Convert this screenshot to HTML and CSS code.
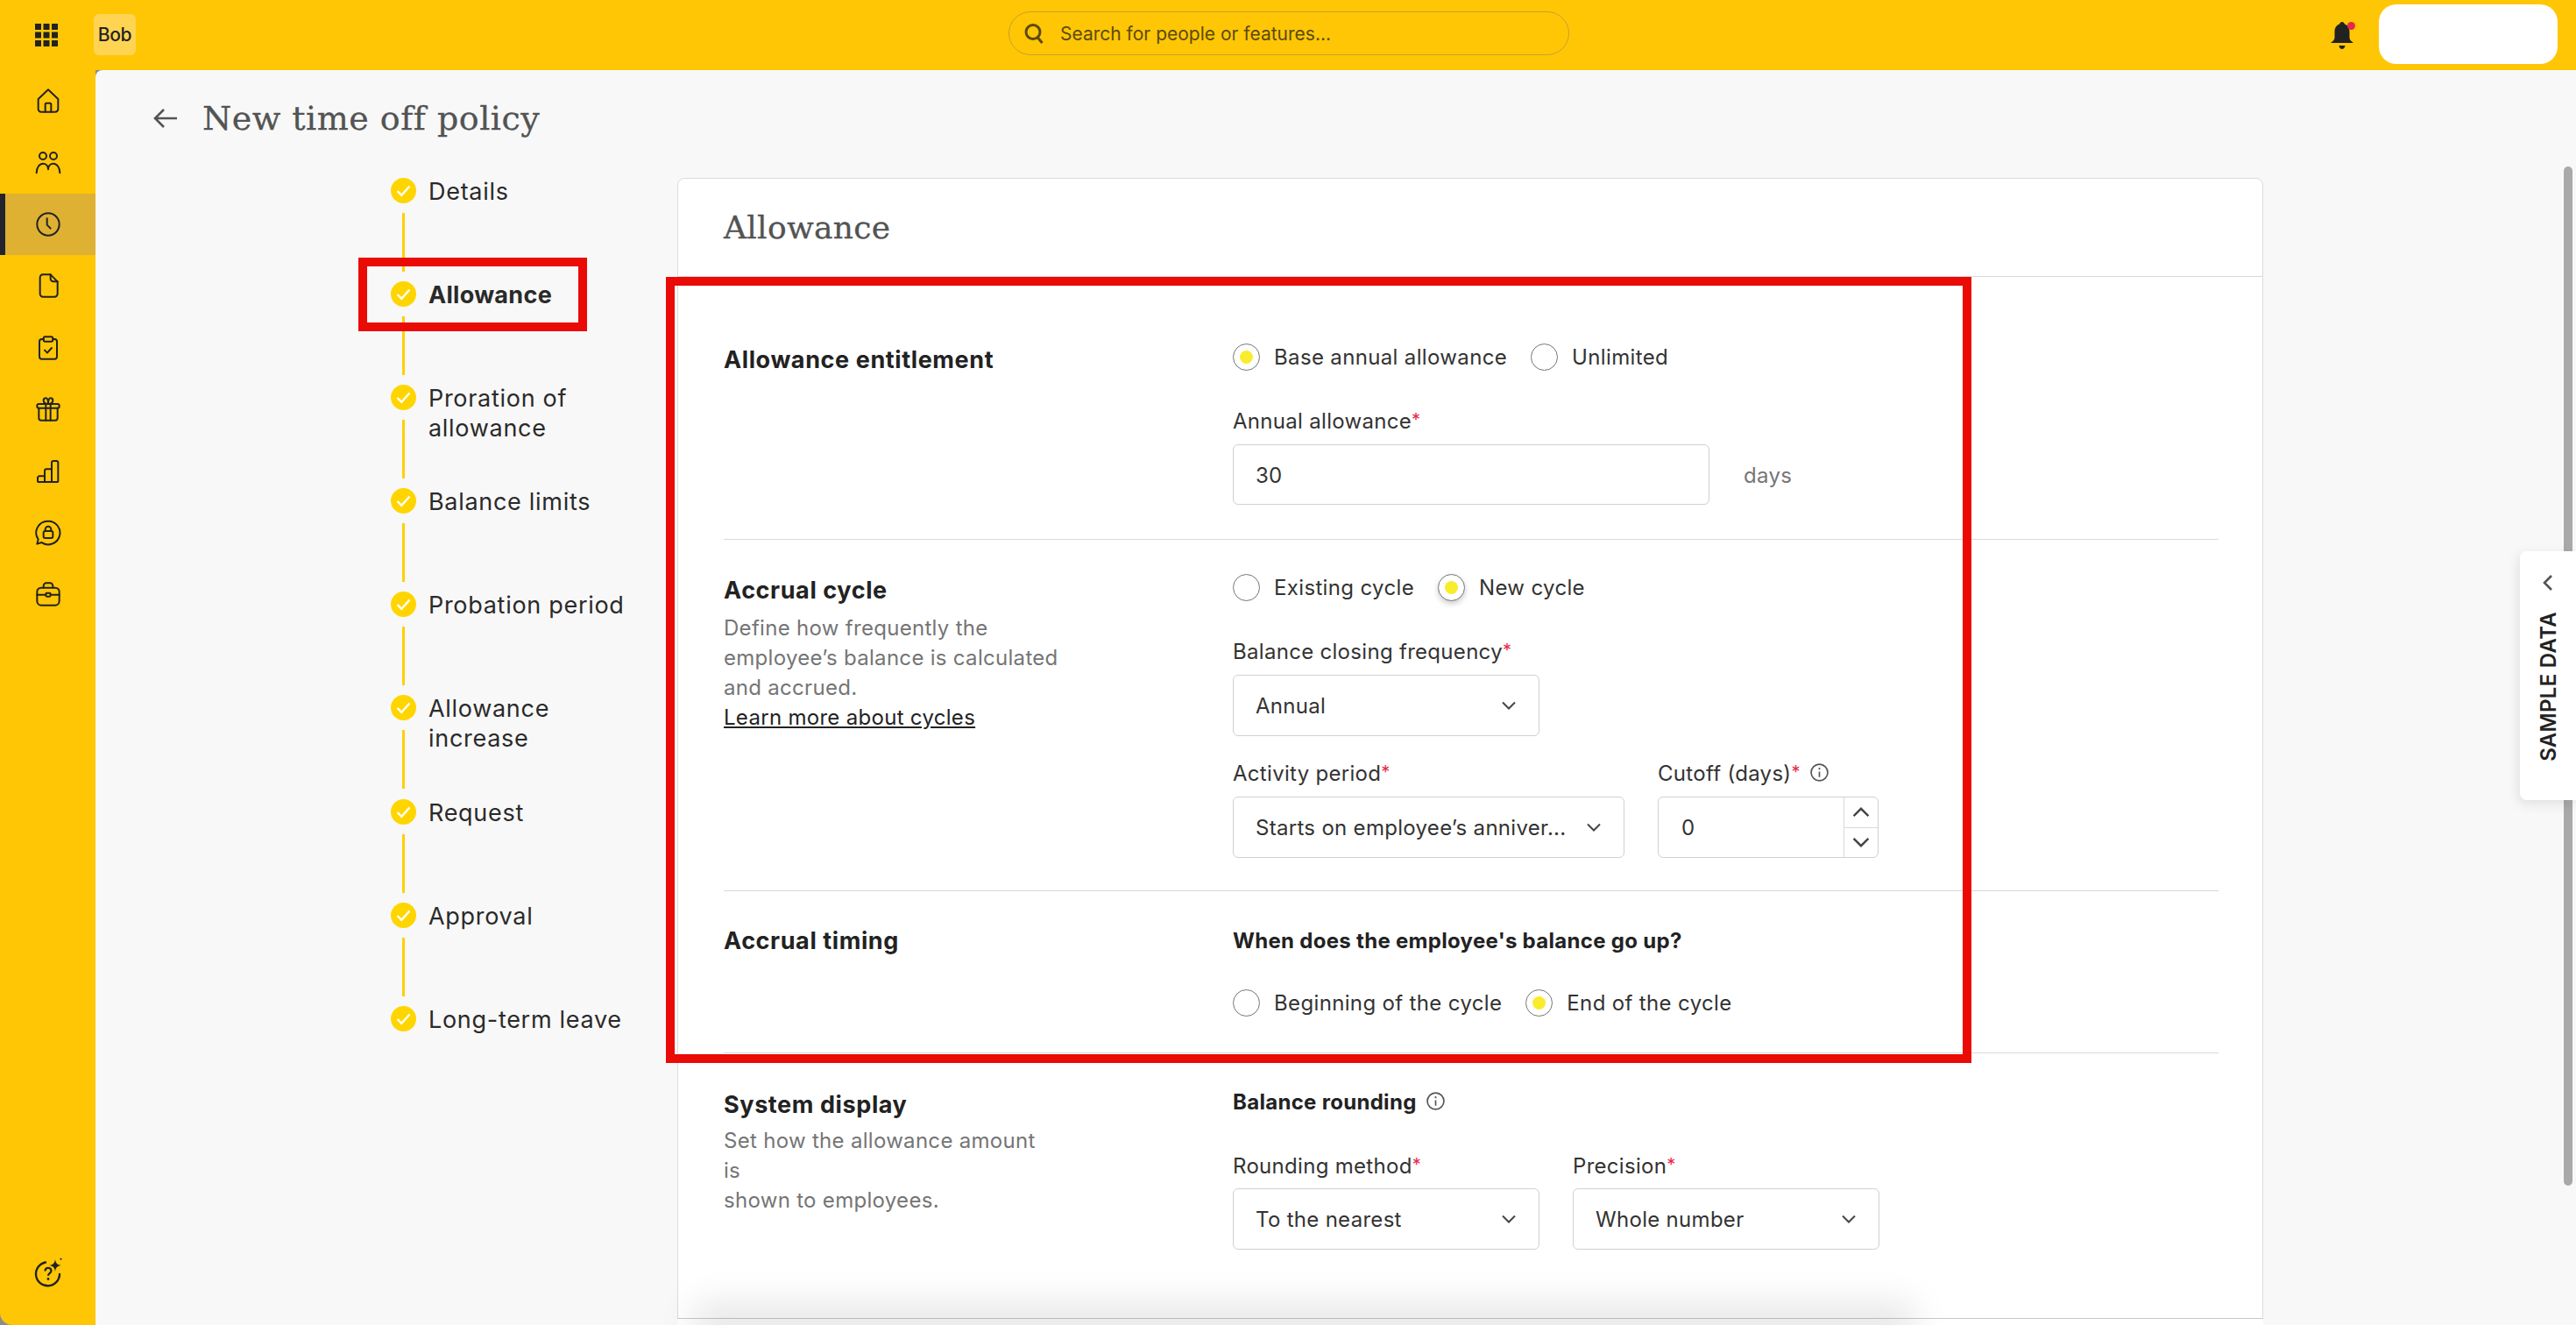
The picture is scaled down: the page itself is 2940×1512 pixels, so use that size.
FILE: index.html
```html
<!DOCTYPE html>
<html lang="en">
  <head>
    <title>New time off policy</title>
    <meta charset="utf-8" />
    <link rel="stylesheet" href="styles.css">
  </head>
  <body>
    <div class="app">
      <header class="topbar">
        <div class="topbar-left">
          <svg class="grid-icon" viewBox="0 0 26 26"><g fill="#222"><rect x="0" y="0" width="7" height="7"/><rect x="9.5" y="0" width="7" height="7"/><rect x="19" y="0" width="7" height="7"/><rect x="0" y="9.5" width="7" height="7"/><rect x="9.5" y="9.5" width="7" height="7"/><rect x="19" y="9.5" width="7" height="7"/><rect x="0" y="19" width="7" height="7"/><rect x="9.5" y="19" width="7" height="7"/><rect x="19" y="19" width="7" height="7"/></g></svg>
          <div class="logo">Bob</div>
        </div>
        <div class="search">
          <svg class="search-icon" viewBox="0 0 24 24"><circle cx="11" cy="10.5" r="8" fill="none" stroke="#5c4a0c" stroke-width="3"/><path d="M16 16.5 21.5 23" stroke="#5c4a0c" stroke-width="3" fill="none"/></svg>
          <span>Search for people or features...</span>
        </div>
        <div class="topbar-right">
          <div class="bell">
            <svg viewBox="0 0 26 32" width="26" height="32"><path d="M13 0c1.600 0 2.600 1 2.800 2.400C19.600 3.600 21.500 7 21.500 11v7c0 2.500 2 4 4.500 6H0c2.500-2 4.500-3.500 4.500-6v-7c0-4 1.900-7.400 5.700-8.600C10.400 1 11.400 0 13 0z" fill="#222"/><path d="M9.500 27h7c-.4 2.500-1.800 4-3.500 4s-3.100-1.500-3.500-4z" fill="#222"/></svg>
            <span class="bell-dot"></span>
          </div>
          <div class="user-box"></div>
        </div>
      </header>

      <div class="layout">
        <nav class="sidebar">
          <div class="nav-items">
            <a class="nav-item"><svg class="nav-icon" viewBox="0 0 24 24"><path d="M3.500 10.500 12 2.500l8.500 8V19a2.500 2.500 0 0 1-2.500 2.500H6A2.500 2.500 0 0 1 3.500 19z"/><path d="M9.500 21.500V15a1 1 0 0 1 1-1h3a1 1 0 0 1 1 1v6.500"/></svg></a>
            <a class="nav-item"><svg class="nav-icon" viewBox="0 0 24 24"><circle cx="7.500" cy="6" r="3"/><circle cx="16.500" cy="6" r="3"/><path d="M2 20.500c0-4.500 2.500-8 5.500-8 2.500 0 4.500 2 4.500 5 0-3 2-5 4.500-5 3 0 5.500 3.500 5.500 8"/></svg></a>
            <a class="nav-item active"><svg class="nav-icon" viewBox="0 0 24 24"><circle cx="12" cy="12" r="9.500"/><path d="M11 7v5.500l3 3"/></svg></a>
            <a class="nav-item"><svg class="nav-icon" viewBox="0 0 24 24"><path d="M5 5a2.500 2.500 0 0 1 2.500-2.500H14l6 6V19a2.500 2.500 0 0 1-2.500 2.500h-10A2.500 2.500 0 0 1 5 19z"/><path d="M14 2.500V6a2.500 2.500 0 0 0 2.500 2.500H20"/></svg></a>
            <a class="nav-item"><svg class="nav-icon" viewBox="0 0 24 24"><path d="M8 4.500H6.500A2 2 0 0 0 4.500 6.500V19.500a2 2 0 0 0 2 2h11a2 2 0 0 0 2-2V6.500a2 2 0 0 0-2-2H16"/><rect x="8" y="2.500" width="8" height="4" rx="1.500"/><path d="m9 14 2.200 2.200L15 12"/></svg></a>
            <a class="nav-item"><svg class="nav-icon" viewBox="0 0 24 24"><rect x="2.500" y="7.500" width="19" height="3.500" rx="1.500"/><path d="M4 11v8.500a2 2 0 0 0 2 2h12a2 2 0 0 0 2-2V11"/><path d="M10 7.500v14M14 7.500v14"/><path d="M12 7.500C9 7.500 8 6 8 4.500s1-2 2-2 2 1.500 2 5c0-3.500 1-5 2-5s2 .5 2 2-1 3-4 3z"/></svg></a>
            <a class="nav-item"><svg class="nav-icon" viewBox="0 0 24 24"><path d="M3 20.500v-3a1.500 1.500 0 0 1 1.500-1.500H9v-4.500A1.500 1.500 0 0 1 10.500 10H15V4.500A1.500 1.500 0 0 1 16.500 3h2.500a1.500 1.500 0 0 1 1.500 1.500v16a.5.5 0 0 1-.5.5H3.500a.5.5 0 0 1-.5-.5z"/><path d="M9 16v5M15 10v11"/></svg></a>
            <a class="nav-item"><svg class="nav-icon" viewBox="0 0 24 24"><path d="M12 2a10 10 0 1 1-5.500 18.300L2.500 21.500l1-3.800A10 10 0 0 1 12 2z"/><rect x="8" y="10.500" width="8" height="6" rx="1.500"/><path d="M9.500 10.500V9a2.500 2.500 0 0 1 5 0v1.500"/></svg></a>
            <a class="nav-item"><svg class="nav-icon" viewBox="0 0 24 24"><rect x="2.500" y="6.500" width="19" height="15" rx="3.500"/><path d="M8 6.500V5a2.500 2.500 0 0 1 2.500-2.500h3A2.500 2.500 0 0 1 16 5v1.500"/><path d="M2.500 12.500H10M14 12.500h7.500"/><rect x="10" y="11" width="4" height="3" rx=".8"/></svg></a>
          </div>
          <a class="nav-help"><svg class="nav-help-icon" viewBox="0 0 36 36"><path d="M15 5.500A13.500 13.500 0 1 0 31 19" fill="none" stroke="#222" stroke-width="2.400" stroke-linecap="round"/><path d="M14.500 15.500c0-2.300 1.600-3.700 3.500-3.700s3.500 1.300 3.500 3.100c0 2.900-3.500 2.900-3.500 5.900" fill="none" stroke="#222" stroke-width="2.200"/><circle cx="18" cy="24.500" r="1.400" fill="#222"/><path d="M26 2c.6 4.600 2.400 6.400 7 7-4.600.6-6.400 2.400-7 7-.6-4.600-2.400-6.400-7-7 4.600-.6 6.400-2.400 7-7z" fill="#222"/><path d="M32.500 0c.2 1.200.6 1.600 1.800 1.800-1.200.2-1.600.6-1.800 1.800-.2-1.200-.6-1.600-1.800-1.800 1.200-.2 1.600-.6 1.800-1.800z" fill="#222"/></svg></a>
        </nav>

        <main class="main">
          <div class="page-title">
            <svg class="back-icon" viewBox="0 0 28 24"><path d="M27 12H2M12 2 2 12l10 10" fill="none" stroke="#535353" stroke-width="2.600"/></svg>
            <h1>New time off policy</h1>
          </div>

          <div class="content">
            <ol class="steps">
              <li class="step"><div class="step-mark"><svg class="check" viewBox="0 0 29 29"><circle cx="14.500" cy="14.500" r="14.500" fill="#ffd500"/><path d="m7.500 15 4.800 4.800L21.500 9.500" fill="none" stroke="#fff" stroke-width="2.400"/></svg><span class="step-line"></span></div><span class="step-label">Details</span></li>
              <li class="step current"><div class="step-mark"><svg class="check" viewBox="0 0 29 29"><circle cx="14.500" cy="14.500" r="14.500" fill="#ffd500"/><path d="m7.500 15 4.800 4.800L21.500 9.500" fill="none" stroke="#fff" stroke-width="2.400"/></svg><span class="step-line"></span></div><span class="step-label">Allowance</span></li>
              <li class="step"><div class="step-mark"><svg class="check" viewBox="0 0 29 29"><circle cx="14.500" cy="14.500" r="14.500" fill="#ffd500"/><path d="m7.500 15 4.800 4.800L21.500 9.500" fill="none" stroke="#fff" stroke-width="2.400"/></svg><span class="step-line"></span></div><span class="step-label">Proration of<br>allowance</span></li>
              <li class="step"><div class="step-mark"><svg class="check" viewBox="0 0 29 29"><circle cx="14.500" cy="14.500" r="14.500" fill="#ffd500"/><path d="m7.500 15 4.800 4.800L21.500 9.500" fill="none" stroke="#fff" stroke-width="2.400"/></svg><span class="step-line"></span></div><span class="step-label">Balance limits</span></li>
              <li class="step"><div class="step-mark"><svg class="check" viewBox="0 0 29 29"><circle cx="14.500" cy="14.500" r="14.500" fill="#ffd500"/><path d="m7.500 15 4.800 4.800L21.500 9.500" fill="none" stroke="#fff" stroke-width="2.400"/></svg><span class="step-line"></span></div><span class="step-label">Probation period</span></li>
              <li class="step"><div class="step-mark"><svg class="check" viewBox="0 0 29 29"><circle cx="14.500" cy="14.500" r="14.500" fill="#ffd500"/><path d="m7.500 15 4.800 4.800L21.500 9.500" fill="none" stroke="#fff" stroke-width="2.400"/></svg><span class="step-line"></span></div><span class="step-label">Allowance<br>increase</span></li>
              <li class="step"><div class="step-mark"><svg class="check" viewBox="0 0 29 29"><circle cx="14.500" cy="14.500" r="14.500" fill="#ffd500"/><path d="m7.500 15 4.800 4.800L21.500 9.500" fill="none" stroke="#fff" stroke-width="2.400"/></svg><span class="step-line"></span></div><span class="step-label">Request</span></li>
              <li class="step"><div class="step-mark"><svg class="check" viewBox="0 0 29 29"><circle cx="14.500" cy="14.500" r="14.500" fill="#ffd500"/><path d="m7.500 15 4.800 4.800L21.500 9.500" fill="none" stroke="#fff" stroke-width="2.400"/></svg><span class="step-line"></span></div><span class="step-label">Approval</span></li>
              <li class="step last"><div class="step-mark"><svg class="check" viewBox="0 0 29 29"><circle cx="14.500" cy="14.500" r="14.500" fill="#ffd500"/><path d="m7.500 15 4.800 4.800L21.500 9.500" fill="none" stroke="#fff" stroke-width="2.400"/></svg></div><span class="step-label">Long-term leave</span></li>
            </ol>

            <section class="card">
              <div class="card-header"><h2>Allowance</h2></div>
              <div class="card-body">

                <div class="row row-entitlement">
                  <div class="row-info"><h3>Allowance entitlement</h3></div>
                  <div class="row-fields">
                    <div class="radio-group">
                      <label class="radio checked"><span class="radio-dot"></span>Base annual allowance</label>
                      <label class="radio"><span class="radio-dot"></span>Unlimited</label>
                    </div>
                    <div class="field field-annual">
                      <div class="field-label">Annual allowance<i>*</i></div>
                      <div class="field-inline">
                        <div class="input input-annual">30</div>
                        <span class="unit">days</span>
                      </div>
                    </div>
                  </div>
                </div>

                <div class="row row-cycle">
                  <div class="row-info">
                    <h3>Accrual cycle</h3>
                    <p>Define how frequently the<br>employee’s balance is calculated<br>and accrued.<br><a class="learn-more">Learn more about cycles</a></p>
                  </div>
                  <div class="row-fields">
                    <div class="radio-group">
                      <label class="radio"><span class="radio-dot"></span>Existing cycle</label>
                      <label class="radio checked focused"><span class="radio-dot"></span>New cycle</label>
                    </div>
                    <div class="field field-frequency">
                      <div class="field-label">Balance closing frequency<i>*</i></div>
                      <div class="input select select-short"><span>Annual</span><svg class="chevron" viewBox="0 0 16 10"><path d="m1 1.500 7 7 7-7"/></svg></div>
                    </div>
                    <div class="field-pair">
                      <div class="field">
                        <div class="field-label">Activity period<i>*</i></div>
                        <div class="input select select-long"><span>Starts on employee’s anniver...</span><svg class="chevron" viewBox="0 0 16 10"><path d="m1 1.500 7 7 7-7"/></svg></div>
                      </div>
                      <div class="field">
                        <div class="field-label">Cutoff (days)<i>*</i><svg class="info-icon" viewBox="0 0 20 20"><circle cx="10" cy="10" r="9"/><path d="M10 9v6M10 4.800v2"/></svg></div>
                        <div class="input number">
                          <span class="number-value">0</span>
                          <div class="spinner">
                            <div class="spin"><svg class="chevron spin-chevron up" viewBox="0 0 16 10"><path d="m1 1.500 7 7 7-7"/></svg></div>
                            <div class="spin"><svg class="chevron spin-chevron" viewBox="0 0 16 10"><path d="m1 1.500 7 7 7-7"/></svg></div>
                          </div>
                        </div>
                      </div>
                    </div>
                  </div>
                </div>

                <div class="row row-timing">
                  <div class="row-info"><h3>Accrual timing</h3></div>
                  <div class="row-fields">
                    <div class="subhead">When does the employee's balance go up?</div>
                    <div class="radio-group timing-radios">
                      <label class="radio"><span class="radio-dot"></span>Beginning of the cycle</label>
                      <label class="radio checked"><span class="radio-dot"></span>End of the cycle</label>
                    </div>
                  </div>
                </div>

                <div class="row row-display">
                  <div class="row-info">
                    <h3>System display</h3>
                    <p>Set how the allowance amount<br>is<br>shown to employees.</p>
                  </div>
                  <div class="row-fields">
                    <div class="subhead">Balance rounding<svg class="info-icon" viewBox="0 0 20 20"><circle cx="10" cy="10" r="9"/><path d="M10 9v6M10 4.800v2"/></svg></div>
                    <div class="field-pair display-pair">
                      <div class="field">
                        <div class="field-label">Rounding method<i>*</i></div>
                        <div class="input select select-short"><span>To the nearest</span><svg class="chevron" viewBox="0 0 16 10"><path d="m1 1.500 7 7 7-7"/></svg></div>
                      </div>
                      <div class="field">
                        <div class="field-label">Precision<i>*</i></div>
                        <div class="input select select-short"><span>Whole number</span><svg class="chevron" viewBox="0 0 16 10"><path d="m1 1.500 7 7 7-7"/></svg></div>
                      </div>
                    </div>
                  </div>
                </div>

              </div>
            </section>
          </div>
        </main>
      </div>

      <!-- things on top of the page -->
      <div class="card-footer"></div>
      <div class="scrollbar"></div>
      <div class="sample-tab">
        <svg class="sample-chevron" viewBox="0 0 12 20"><path d="M10 2 2 10l8 8" fill="none" stroke="#535353" stroke-width="2.600"/></svg>
        <span>SAMPLE DATA</span>
      </div>
      <div class="mark mark-step"></div>
      <div class="mark mark-form"></div>
    </div>
  </body>
</html>
```

FILE: styles.css
```css
* {
  box-sizing: border-box;
}

html,
body {
  margin: 0;
  height: 100%;
  overflow: hidden;
  background-color: #8c8c8c;
}

body {
  font-family: 'Inter', 'Open Sans', sans-serif;
  color: #222;
}

.app {
  position: relative;
  width: 2940px;
  height: 1512px;
  display: flex;
  flex-direction: column;
  overflow: hidden;
}

/* top bar */
.topbar {
  flex: none;
  height: 80px;
  background-color: #ffc605;
  display: flex;
  align-items: center;
  position: relative;
}

.topbar-left {
  display: flex;
  align-items: center;
  padding-left: 40px;
  gap: 41px;
}

.grid-icon {
  width: 26px;
  height: 26px;
}

.logo {
  width: 48px;
  height: 47px;
  border-radius: 6px;
  background-color: #ffd452;
  display: flex;
  align-items: center;
  justify-content: center;
  font-size: 21px;
  font-weight: 500;
  letter-spacing: -0.3px;
  margin-top: -1px;
}

.search {
  width: 640px;
  height: 50px;
  margin-left: 996px;
  margin-top: -4px;
  border: 1px solid #c9a02a;
  border-radius: 25px;
  display: flex;
  align-items: center;
  padding-left: 16px;
  gap: 18px;
  font-size: 21px;
  color: #5c4a0c;
}

.search-icon {
  width: 24px;
  height: 24px;
}

.topbar-right {
  margin-left: auto;
  padding-right: 21px;
  display: flex;
  align-items: center;
  gap: 29px;
}

.bell {
  position: relative;
  width: 26px;
  height: 32px;
  margin-top: 2px;
}

.bell svg {
  display: block;
}

.bell-dot {
  position: absolute;
  top: 0;
  right: -2px;
  width: 9px;
  height: 9px;
  border-radius: 50%;
  background-color: #e8274b;
}

.user-box {
  width: 204px;
  height: 68px;
  border-radius: 20px;
  background-color: #fff;
  margin-top: -2px;
}

/* side nav */
.layout {
  flex: 1;
  display: flex;
  min-height: 0;
}

.sidebar {
  flex: none;
  width: 109px;
  background-color: #ffc605;
  border-bottom-left-radius: 14px;
  display: flex;
  flex-direction: column;
  justify-content: space-between;
  padding-bottom: 41px;
}

.nav-item,
.nav-help {
  display: flex;
  align-items: center;
  justify-content: center;
  height: 70.400px;
}

.nav-item.active {
  background-color: #deb133;
  border-left: 6px solid #24242c;
  padding-right: 6px;
}

.nav-help {
  height: 36px;
}

.nav-icon {
  width: 32px;
  height: 32px;
  fill: none;
  stroke: #222;
  stroke-width: 1.500;
  stroke-linecap: round;
  stroke-linejoin: round;
}

.nav-help-icon {
  width: 36px;
  height: 36px;
}

/* page */
.main {
  flex: 1;
  min-width: 0;
  background-color: #f8f8f8;
  border-top-left-radius: 8px;
}

.page-title {
  display: flex;
  align-items: center;
  height: 50px;
  margin-top: 30px;
  padding-left: 66px;
}

.back-icon {
  width: 28px;
  height: 24px;
  margin-right: 28px;
}

.page-title h1 {
  margin: 0;
  font-family: 'DejaVu Serif', serif;
  font-weight: 400;
  font-size: 38px;
  letter-spacing: 0.5px;
  color: #535353;
  -webkit-text-stroke: 0.3px #535353;
}

.content {
  display: flex;
  margin-top: 43px;
  padding-left: 337px;
}

/* steps */
.steps {
  flex: none;
  width: 327px;
  margin: 0;
  padding: 0;
  list-style: none;
}

.step {
  display: flex;
  height: 118.100px;
  gap: 14px;
}

.step-mark {
  flex: none;
  width: 29px;
  display: flex;
  flex-direction: column;
  align-items: center;
}

.check {
  width: 29px;
  height: 29px;
  flex: none;
}

.step-line {
  width: 3px;
  height: 67px;
  margin-top: 11px;
  background-color: #ffd000;
}

.step-label {
  margin-top: -1px;
  font-size: 27px;
  line-height: 34px;
  letter-spacing: 0.7px;
  color: #2a2a2a;
  white-space: nowrap;
}

.step.current .step-label {
  font-weight: 700;
  letter-spacing: 0.3px;
}

/* card */
.card {
  width: 1810px;
  height: 1400px;
  background-color: #fff;
  border: 1px solid #dcdcdc;
  border-radius: 8px;
}

.card-header {
  height: 112px;
  display: flex;
  align-items: center;
  padding-left: 52px;
  border-bottom: 1px solid #d9d9d9;
}

.card-header h2 {
  margin: 0;
  font-family: 'DejaVu Serif', serif;
  font-weight: 400;
  font-size: 36px;
  letter-spacing: 0.3px;
  color: #535353;
  -webkit-text-stroke: 0.3px #535353;
}

.card-body {
  padding: 0 50px 0 52px;
}

.row {
  display: grid;
  grid-template-columns: 581px 1fr;
  border-bottom: 1px solid #d9d9d9;
}

.row-display {
  border-bottom: 0;
}

.row h3 {
  margin: 0;
  font-size: 27px;
  line-height: 34px;
  letter-spacing: 0.6px;
  font-weight: 700;
  color: #222;
}

.row p {
  margin: 7px 0 0;
  font-size: 24px;
  line-height: 34px;
  letter-spacing: 0.3px;
  color: #757575;
}

.row-cycle p {
  margin-top: 9px;
}

.learn-more {
  color: #222;
  text-decoration: underline;
}

.row-entitlement {
  padding: 76px 0 39px;
}

.row-entitlement .row-info {
  padding-top: 2px;
}

.row-cycle {
  padding: 39px 0 37px;
}

.row-cycle .row-info {
  padding-top: 2px;
}

.row-timing {
  padding: 40px 0 41px;
}

.row-display {
  padding-top: 39px;
}

.row-display .row-info {
  padding-top: 3px;
}

/* form bits */
.radio-group {
  display: flex;
  height: 31px;
  align-items: center;
  gap: 27px;
}

.timing-radios {
  margin-top: 38px;
}

.radio {
  display: flex;
  align-items: center;
  gap: 16px;
  font-size: 24px;
  letter-spacing: 0.35px;
  color: #333;
}

.radio-dot {
  width: 31px;
  height: 31px;
  border-radius: 50%;
  border: 1px solid #767676;
  background-color: #fff;
  display: flex;
  align-items: center;
  justify-content: center;
}

.radio.checked .radio-dot::after {
  content: '';
  width: 15px;
  height: 15px;
  border-radius: 50%;
  background-color: #f8ec2d;
}

.radio.focused .radio-dot {
  box-shadow: 0 3px 6px rgba(0, 0, 0, 0.2);
}

.field-annual,
.field-frequency {
  margin-top: 41px;
}

.field-label {
  font-size: 24px;
  line-height: 34px;
  letter-spacing: 0.3px;
  color: #333;
  margin-bottom: 9px;
  white-space: nowrap;
}

.field-label i {
  color: #e8274b;
  font-style: normal;
  font-size: 20px;
  line-height: 0;
  vertical-align: 3px;
}

.field-inline {
  display: flex;
  align-items: center;
  gap: 39px;
}

.input {
  height: 70px;
  border: 1px solid #d0d0d0;
  border-radius: 6px;
  background-color: #fff;
  display: flex;
  align-items: center;
  padding-left: 25px;
  font-size: 24px;
  letter-spacing: 0.3px;
  color: #333;
}

.input-annual {
  width: 544px;
  height: 69px;
  padding-top: 2px;
}

.unit {
  font-size: 24px;
  letter-spacing: 0.3px;
  color: #767676;
  padding-top: 2px;
}

.select {
  justify-content: space-between;
  padding-right: 26px;
}

.select-short {
  width: 350px;
}

.select-long {
  width: 447px;
}

.chevron {
  width: 16px;
  height: 10px;
  fill: none;
  stroke: #444;
  stroke-width: 2;
}

.spin-chevron {
  width: 20px;
  height: 12px;
}

.chevron.up {
  transform: rotate(180deg);
}

.field-pair {
  display: flex;
  gap: 38px;
  margin-top: 26px;
}

.display-pair {
  margin-top: 39px;
}

.display-pair .field-label {
  margin-bottom: 8px;
}

.number {
  width: 252px;
  padding: 0 0 0 26px;
  justify-content: space-between;
}

.spinner {
  width: 39px;
  height: 100%;
  display: flex;
  flex-direction: column;
  border-left: 1px solid #d9d9d9;
}

.spin {
  flex: 1;
  display: flex;
  align-items: center;
  justify-content: center;
}

.spin:first-child {
  border-bottom: 1px solid #d9d9d9;
}

.info-icon {
  width: 21px;
  height: 21px;
  margin-left: 11px;
  vertical-align: -1px;
  fill: none;
  stroke: #555;
  stroke-width: 1.600;
}

.subhead {
  font-size: 24px;
  line-height: 34px;
  letter-spacing: 0.3px;
  font-weight: 700;
  color: #222;
}

/* overlays */
.card-footer {
  position: absolute;
  left: 773px;
  bottom: 0;
  width: 1810px;
  height: 8px;
  background-color: #fff;
  border-top: 1px solid #c8c8c8;
}

.card-footer::before {
  content: '';
  position: absolute;
  left: 40px;
  right: 420px;
  top: 10px;
  height: 1px;
  box-shadow: 0 -6px 40px 22px rgba(0, 0, 0, 0.1);
}

.scrollbar {
  position: absolute;
  left: 2926px;
  top: 190px;
  width: 10px;
  height: 1163px;
  border-radius: 5px;
  background-color: #a9a9a9;
}

.sample-tab {
  position: absolute;
  left: 2876px;
  top: 629px;
  width: 64px;
  height: 284px;
  background-color: #fff;
  border-radius: 8px 0 0 8px;
  box-shadow: -2px 4px 14px rgba(0, 0, 0, 0.1);
  display: flex;
  flex-direction: column;
  align-items: center;
  padding-top: 26px;
  gap: 23px;
}

.sample-chevron {
  width: 12px;
  height: 20px;
}

.sample-tab span {
  writing-mode: vertical-rl;
  transform: rotate(180deg);
  font-size: 24px;
  font-weight: 600;
  letter-spacing: 0.3px;
  white-space: nowrap;
}

.mark {
  position: absolute;
  border: 10px solid #ea0a06;
}

.mark-step {
  left: 409px;
  top: 294px;
  width: 261px;
  height: 84px;
}

.mark-form {
  left: 760px;
  top: 316px;
  width: 1490px;
  height: 897px;
}
```
